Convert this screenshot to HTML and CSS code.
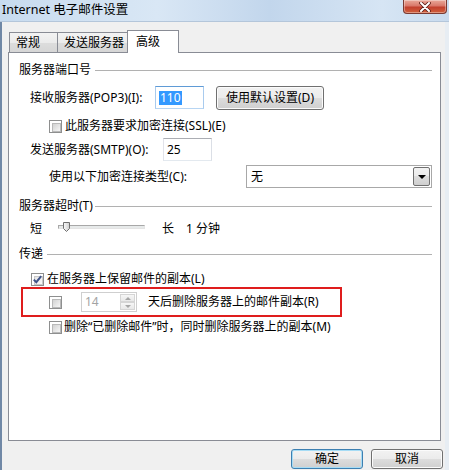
FILE: index.html
```html
<!DOCTYPE html>
<html lang="zh-CN">
<head>
    <meta charset="UTF-8">
    <title>Internet 电子邮件设置</title>
    <link rel="stylesheet" href="styles.css">
</head>
<body>
    <div class="window">
        <div class="titlebar">
            <span class="title">Internet 电子邮件设置</span>
            <span class="close">
                <svg width="14" height="10" viewBox="0 0 14 10">
                    <path d="M3 1 L11 9 M11 1 L3 9" stroke="#5a1d17" stroke-width="3.6" stroke-linecap="round"/>
                    <path d="M3 1 L11 9 M11 1 L3 9" stroke="#fff" stroke-width="2" stroke-linecap="round"/>
                </svg>
            </span>
        </div>

        <div class="client">
            <div class="tabs">
                <div class="tab t1">常规</div>
                <div class="tab t2">发送服务器</div>
                <div class="tab t3 active">高级</div>
            </div>

            <div class="panel">
                <div class="group"><span>服务器端口号</span><i class="rule"></i></div>

                <div class="row row-pop">
                    <span class="lbl lbl-pop">接收服务器(POP3)(I):</span>
                    <div class="edit edit-port focus"><span class="hl">110</span></div>
                    <div class="btn btn-default-set">使用默认设置(D)</div>
                </div>

                <div class="row row-ssl">
                    <span class="cb"></span>
                    <span class="cb-text">此服务器要求加密连接(SSL)(E)</span>
                </div>

                <div class="row row-smtp">
                    <span class="lbl lbl-smtp">发送服务器(SMTP)(O):</span>
                    <div class="edit edit-port">25</div>
                </div>

                <div class="row row-enc">
                    <span class="lbl lbl-enc">使用以下加密连接类型(C):</span>
                    <div class="combo">
                        <span>无</span>
                        <span class="drop"><i class="tri"></i></span>
                    </div>
                </div>

                <div class="group group-2"><span>服务器超时(T)</span><i class="rule"></i></div>

                <div class="row row-slider">
                    <span>短</span>
                    <div class="slider">
                        <div class="track"></div>
                        <svg class="thumb" width="9" height="11" viewBox="0 0 9 11">
                            <defs>
                                <linearGradient id="tg" x1="0" y1="0" x2="1" y2="0">
                                    <stop offset="0" stop-color="#fafafa"/>
                                    <stop offset="1" stop-color="#cfcfcf"/>
                                </linearGradient>
                            </defs>
                            <path d="M1.5 0.5 H7.5 V6.5 L4.5 9.5 L1.5 6.5 Z" fill="url(#tg)" stroke="#707070"/>
                        </svg>
                    </div>
                    <span class="long">长</span>
                    <span class="minutes">1 分钟</span>
                </div>

                <div class="group group-3"><span>传递</span><i class="rule"></i></div>

                <div class="row row-keep">
                    <span class="cb checked">
                        <svg width="11" height="11" viewBox="0 0 11 11">
                            <path d="M1.8 5.6 L4.3 8.2 L9.2 2.2" fill="none" stroke="#3f5389" stroke-width="2"/>
                        </svg>
                    </span>
                    <span class="cb-text">在服务器上保留邮件的副本(L)</span>
                </div>

                <div class="mark">
                    <span class="cb"></span>
                    <div class="spin">
                        <span class="spin-val">14</span>
                        <div class="spin-btns">
                            <span class="up"><i></i></span>
                            <span class="down"><i></i></span>
                        </div>
                    </div>
                    <span class="days">天后删除服务器上的邮件副本(R)</span>
                </div>

                <div class="row row-del">
                    <span class="cb"></span>
                    <span class="cb-text del-text">删除“已删除邮件”时，同时删除服务器上的副本(M)</span>
                </div>
            </div>

            <div class="footer">
                <div class="btn btn-ok">确定</div>
                <div class="btn btn-cancel">取消</div>
            </div>
        </div>
    </div>
</body>
</html>
```

FILE: styles.css
```css
* {
    box-sizing: border-box;
}
body {
    margin: 0;
    width: 449px;
    height: 470px;
    overflow: hidden;
    font-family: "Noto Sans", "Noto Sans CJK SC", sans-serif;
    font-size: 12px;
    line-height: 16px;
    color: #000;
    background: #f0f0f0;
}
.window {
    display: flex;
    flex-direction: column;
    width: 449px;
    height: 470px;
}

/* 标题栏 */
.titlebar {
    display: flex;
    align-items: flex-start;
    height: 22px;
    padding-left: 2px;
    background: linear-gradient(to right, #c7dbef 0%, #d9e7f5 35%, #c2d6ec 60%, #d6e5f4 85%, #c9dbee 100%);
    border-bottom: 1px solid #b4c6da;
}
.title {
    padding-top: 2px;
    font-size: 12.5px;
}
.close {
    display: flex;
    align-items: center;
    justify-content: center;
    width: 44px;
    height: 14px;
    margin-left: auto;
    margin-right: 2px;
    border: 1px solid #7a3a32;
    border-top: none;
    border-radius: 0 0 4px 4px;
    background: linear-gradient(#e9a99a 0%, #d9786a 45%, #c2402e 55%, #d0603c 100%);
    box-shadow: inset 0 0 0 1px rgba(255, 255, 255, .35);
}

.client {
    flex: 1;
    padding: 8px 0 0 6px;
    border-left: 2px solid #7088a6;
    border-right: 4px solid #e7edf3;
}

/* 选项卡 */
.tabs {
    position: relative;
    z-index: 1;
    display: flex;
    align-items: flex-end;
    height: 23px;
    margin-bottom: -1px;
    padding-left: 1px;
}
.tab {
    height: 20px;
    margin-bottom: 1px;
    padding-left: 6px;
    line-height: 19px;
    border: 1px solid #898c95;
    border-bottom: none;
    background: linear-gradient(#f3f3f3 0%, #ebebeb 50%, #dddddd 50%, #d6d6d6 100%);
    white-space: nowrap;
}
.t1 {
    width: 49px;
}
.t2 {
    width: 70px;
    border-left: none;
}
.t3 {
    width: 52px;
    margin-left: -1px;
}
.tab.active {
    height: 23px;
    margin-bottom: 0;
    padding-left: 8px;
    line-height: 21px;
    background: #fff;
}

.panel {
    width: 433px;
    height: 389px;
    padding: 9px 8px 0 10px;
    border: 1px solid #898c95;
    background: #fff;
}

/* 分组标题 */
.group {
    display: flex;
    align-items: center;
    height: 16px;
}
.group .rule {
    flex: 1;
    height: 1px;
    margin-left: 4px;
    background: #b1b1b1;
}
.group-2 {
    margin-top: 10px;
}
.group-2 .rule {
    margin-left: 2px;
}
.group-3 {
    margin-top: 9px;
}

.row {
    display: flex;
    align-items: center;
    height: 16px;
    white-space: nowrap;
}
.row-pop {
    height: 23px;
    margin-top: 8px;
    padding-left: 11px;
}
.lbl-pop {
    width: 125px;
}
.row-ssl {
    margin-top: 9px;
    padding-left: 30px;
}
.row-smtp {
    height: 23px;
    margin-top: 4px;
    padding-left: 11px;
}
.lbl-smtp {
    width: 133px;
}
.row-enc {
    height: 23px;
    margin-top: 4px;
    padding-left: 30px;
}
.lbl-enc {
    width: 197px;
}

/* 文本框 */
.edit {
    height: 23px;
    padding: 3px 0 0 3px;
    border: 1px solid;
    border-color: #abadb3 #dbdfe6 #e3e9ef #e2e3ea;
    background: #fff;
}
.edit-port {
    width: 49px;
}
.edit.focus {
    border-color: #5f9bd6 #a9cbee #b7d5f3 #a9cbee;
}
.hl {
    display: inline-block;
    padding: 0 1px;
    line-height: 14px;
    margin-top: 1px;
    color: #fff;
    background: #3399ff;
}

/* 按钮 */
.btn {
    display: flex;
    align-items: center;
    justify-content: center;
    border: 1px solid #707070;
    border-radius: 3px;
    background: linear-gradient(#f2f2f2 0%, #ebebeb 50%, #dddddd 50%, #cfcfcf 100%);
    box-shadow: inset 0 0 0 1px #fbfbfb;
}
.btn-default-set {
    width: 108px;
    height: 24px;
    margin-left: 12px;
}

/* 复选框 */
.cb {
    position: relative;
    display: inline-block;
    flex: none;
    width: 13px;
    height: 13px;
    border: 1px solid #8e8f8f;
    background: #fff;
}
.cb::before {
    content: "";
    position: absolute;
    left: 2px;
    top: 2px;
    width: 7px;
    height: 7px;
    border: 1px solid #b9b9b9;
    background: linear-gradient(135deg, #d2d2d2, #f6f6f6);
}
.cb.checked::before {
    border-color: #c9c9c9;
    background: linear-gradient(135deg, #e6e6e6, #fbfbfb);
}
.cb svg {
    position: absolute;
    left: 0;
    top: 0;
}
.cb-text {
    margin-left: 3px;
}
.del-text {
    margin-left: 2px;
}

/* 下拉框 */
.combo {
    display: flex;
    align-items: center;
    width: 186px;
    height: 23px;
    padding: 0 1px 0 4px;
    border: 1px solid #a8a8a8;
    background: #fff;
}
.drop {
    display: flex;
    align-items: center;
    justify-content: center;
    width: 17px;
    height: 19px;
    margin-left: auto;
    border: 1px solid #707070;
    border-radius: 2px;
    background: linear-gradient(#f2f2f2 0%, #ebebeb 50%, #dddddd 50%, #cfcfcf 100%);
}
.tri {
    width: 0;
    height: 0;
    border-left: 4px solid transparent;
    border-right: 4px solid transparent;
    border-top: 4px solid #000;
}

/* 滑块 */
.row-slider {
    margin-top: 7px;
    padding-left: 11px;
}
.slider {
    position: relative;
    align-self: flex-start;
    width: 87px;
    height: 16px;
    margin-left: 16px;
}
.track {
    height: 4px;
    margin-top: 4px;
    border: 1px solid;
    border-color: #a8a8a8 #e4e4e4 #e4e4e4 #a8a8a8;
    background: #e7eaea;
}
.thumb {
    position: absolute;
    left: 4px;
    top: 1px;
}
.long {
    margin-left: 17px;
}
.minutes {
    margin-left: 12px;
}

.row-keep {
    margin-top: 9px;
    padding-left: 12px;
}

/* 红框标注 */
.mark {
    display: flex;
    align-items: center;
    width: 321px;
    height: 30px;
    margin-left: 2px;
    padding-left: 26px;
    border: 2px solid #df1d1d;
    white-space: nowrap;
}
.spin {
    display: flex;
    width: 56px;
    height: 20px;
    margin-left: 19px;
    border: 1px solid #cfcfcf;
    background: #fff;
}
.spin-val {
    padding: 1px 0 0 3px;
    color: #a3a3a3;
}
.spin-btns {
    display: flex;
    flex-direction: column;
    width: 16px;
    margin-left: auto;
    padding: 1px 1px 1px 0;
}
.spin-btns span {
    display: flex;
    flex: 1;
    align-items: center;
    justify-content: center;
    border: 1px solid #d5d5d5;
    background: linear-gradient(#f6f6f6, #e8e8e8);
}
.spin-btns .up i {
    border-left: 3px solid transparent;
    border-right: 3px solid transparent;
    border-bottom: 3px solid #a6a6a6;
}
.spin-btns .down i {
    border-left: 3px solid transparent;
    border-right: 3px solid transparent;
    border-top: 3px solid #a6a6a6;
}
.days {
    margin-left: 11px;
}

.row-del {
    margin-top: 2px;
    padding-left: 30px;
}

/* 底部按钮 */
.footer {
    display: flex;
    justify-content: flex-end;
    gap: 8px;
    width: 437px;
    margin-top: 8px;
    padding-right: 2px;
}
.footer .btn {
    width: 72px;
    height: 20px;
}
.btn-ok {
    border-color: #3c7fb1;
    box-shadow: inset 0 0 0 1px #a6dcf5;
}
```
